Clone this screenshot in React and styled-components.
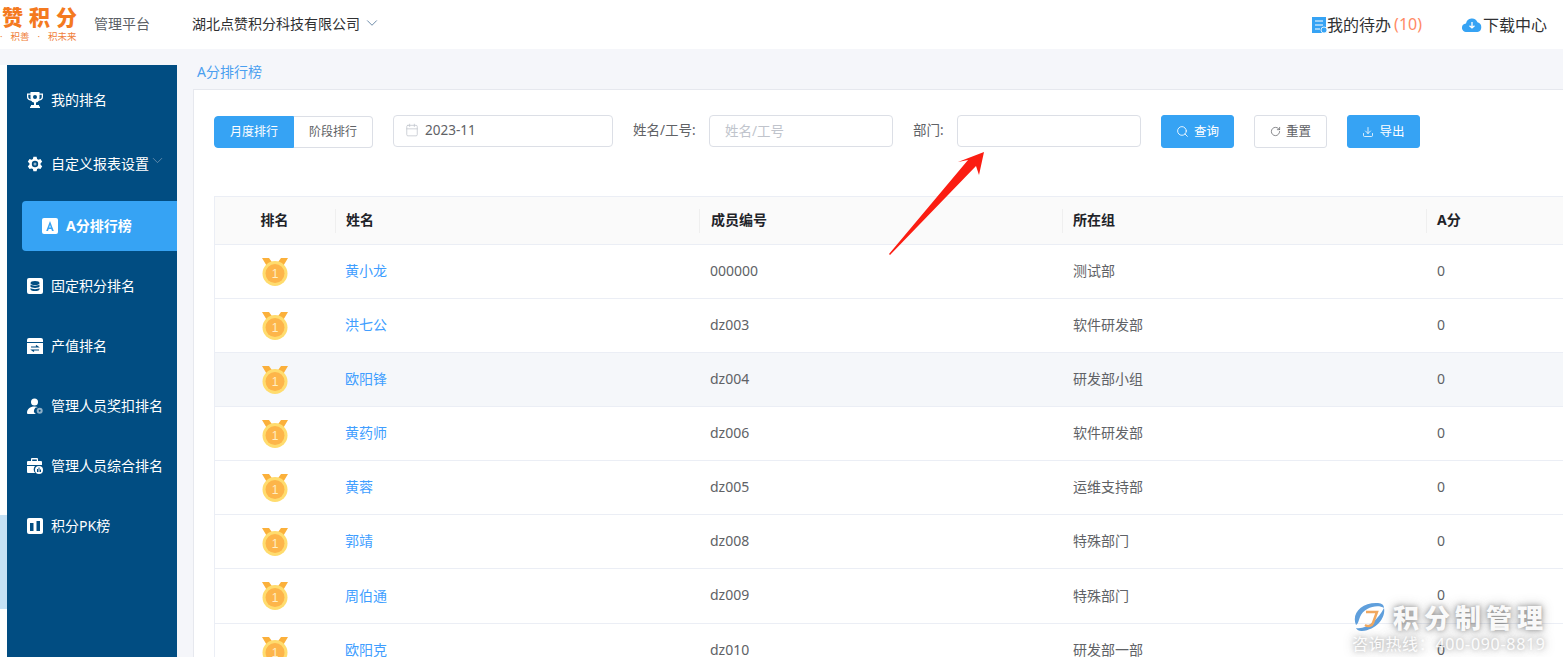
import React from 'react';
import styled, { createGlobalStyle } from 'styled-components';
import { ChevronDown, Search, RotateCw, Download, Calendar } from 'lucide-react';

const Global = createGlobalStyle`
  html, body { margin: 0; padding: 0; height: 100%; overflow: hidden; background: #f5f6fa; }
  * { box-sizing: border-box; }
  body { font-family: "Noto Sans", "Noto Sans CJK SC", sans-serif; }
`;

const Page = styled.div`
  position: relative;
  width: 1563px;
  height: 657px;
  overflow: hidden;
  display: flex;
  flex-direction: column;
`;

const Header = styled.header`
  flex: 0 0 49px;
  height: 49px;
  background: #fff;
  display: flex;
  align-items: center;
  color: #303133;
`;
const Logo = styled.div`
  width: 94px;
  padding-left: 2px;
  margin-top: -8px;
  display: flex;
  flex-direction: column;
  overflow: hidden;
`;
const LogoMark = styled.span`
  font-size: 21px;
  line-height: 24px;
  font-weight: 900;
  letter-spacing: 6px;
  color: #f47a1f;
  white-space: nowrap;
  font-family: "Noto Sans CJK SC", sans-serif;
  margin-top: 4px;
`;
const LogoTag = styled.span`
  font-size: 9.5px;
  line-height: 11px;
  color: #f0803a;
  white-space: nowrap;
  margin: 3px 0 0 -2px;
  word-spacing: 5.5px;
`;
const Platform = styled.span`
  width: 98px;
  font-size: 14px;
  color: #5c5f66;
  margin-top: -4px;
`;
const Company = styled.div`
  display: flex;
  align-items: center;
  gap: 3px;
  font-size: 14px;
  color: #303133;
  margin-top: -4px;
  flex: 1;
`;
const HeadLink = styled.div`
  display: flex;
  align-items: center;
  font-size: 16px;
  color: #303133;
  margin-right: ${p => p.$end}px;
  margin-top: -2px;
`;
const Count = styled.span`
  color: #ff8a65;
  margin-left: 3px;
`;

const Main = styled.div`
  flex: 1;
  display: flex;
  min-height: 0;
`;
const Rail = styled.div`
  flex: 0 0 7px;
  margin-top: 16px;
  background: #fff;
  padding-top: 450px;
`;
const RailMark = styled.div`
  height: 94px;
  background: #c5e1f5;
`;
const Sidebar = styled.nav`
  flex: 0 0 170px;
  margin-top: 16px;
  background: #014d82;
  padding-top: 5px;
  display: flex;
  flex-direction: column;
`;
const NavItem = styled.div`
  height: 60px;
  flex: none;
  display: flex;
  align-items: center;
  gap: 8px;
  padding-left: 20px;
  font-size: 14px;
  color: #fff;
  margin-top: ${p => p.$gap || 0}px;
  white-space: nowrap;
`;
const NavActive = styled.div`
  height: 50px;
  flex: none;
  margin: 7px 0 0 15px;
  padding-left: 20px;
  display: flex;
  align-items: center;
  gap: 8px;
  background: #36a3f4;
  border-radius: 4px 0 0 4px;
  color: #fff;
  font-weight: 700;
  font-size: 14px;
`;
const NavText = styled.span`
  margin-top: -2px;
`;
const NavArrow = styled.span`
  display: flex;
  margin: -8px 0 0 -8px;
  color: #7f9fba;
`;

const Content = styled.main`
  flex: 1;
  min-width: 0;
  padding-left: 16px;
  display: flex;
  flex-direction: column;
`;
const Crumb = styled.div`
  height: 40px;
  flex: none;
  padding: 14px 0 0 4px;
  font-size: 14px;
  line-height: 18px;
  color: #4a9ff0;
`;
const Card = styled.section`
  flex: 1;
  background: #fff;
  border: 1px solid #e6e8ee;
  border-right: 0;
  border-bottom: 0;
  padding: 25px 0 0 20px;
  overflow: hidden;
`;
const Toolbar = styled.div`
  display: flex;
  align-items: flex-start;
  height: 33px;
`;
const Segment = styled.div`
  display: flex;
  margin: 1px 20px 0 0;
`;
const SegButton = styled.button`
  width: ${p => p.$w}px;
  height: 32px;
  padding: 0 0 2px;
  font: inherit;
  font-size: 12px;
  border: 1px solid ${p => (p.$on ? '#36a3f4' : '#dcdfe6')};
  border-left-width: ${p => (p.$on ? 1 : 0)}px;
  background: ${p => (p.$on ? '#36a3f4' : '#fff')};
  color: ${p => (p.$on ? '#fff' : '#606266')};
  border-radius: ${p => (p.$on ? '4px 0 0 4px' : '0 4px 4px 0')};
`;
const Field = styled.div`
  width: ${p => p.$w}px;
  height: 32px;
  border: 1px solid #dcdfe6;
  border-radius: 4px;
  background: #fff;
  display: flex;
  align-items: center;
  gap: 6px;
  padding: 0 0 2px ${p => p.$pad || 15}px;
  font-size: 13.5px;
  color: ${p => (p.$ph ? '#c0c4cc' : '#606266')};
  margin-right: ${p => p.$after || 0}px;
  flex: none;
`;
const Label = styled.span`
  font-size: 13.5px;
  line-height: 30px;
  color: #606266;
  width: ${p => p.$w}px;
  flex: none;
`;
const Action = styled.button`
  width: 73px;
  height: 33px;
  flex: none;
  margin-left: 20px;
  padding: 0;
  font: inherit;
  font-size: 12.5px;
  border-radius: 3px;
  border: 1px solid ${p => (p.$plain ? '#dcdfe6' : '#36a3f4')};
  background: ${p => (p.$plain ? '#fff' : '#36a3f4')};
  color: ${p => (p.$plain ? '#606266' : '#fff')};
  display: flex;
  align-items: center;
  justify-content: center;
  gap: 5px;
`;
const ActionText = styled.span`
  margin-top: -2px;
`;

const Table = styled.div`
  margin-top: 48px;
  width: 1400px;
  border: 1px solid #ebeef5;
  border-right: 0;
`;
const Cols = styled.div`
  display: grid;
  grid-template-columns: 120px 364px 363px 364px 1fr;
  align-items: center;
`;
const HeadRow = styled(Cols)`
  height: 48px;
  background: #fafafa;
  border-bottom: 1px solid #ebeef5;
  font-size: 14px;
  font-weight: 700;
  color: #1f2329;
`;
const HeadCell = styled.div`
  height: 24px;
  line-height: 22px;
  padding-left: ${p => p.$inset || 10}px;
  border-left: 1px solid ${p => (p.$first ? 'transparent' : '#efefef')};
  text-align: ${p => (p.$first ? 'center' : 'left')};
  padding-right: ${p => (p.$first ? 12 : 0)}px;
`;
const Row = styled(Cols)`
  height: ${p => p.$h || 54}px;
  border-bottom: 1px solid #ebeef5;
  background: ${p => (p.$hover ? '#f5f7fa' : '#fff')};
  font-size: 14px;
  color: #606266;
`;
const Cell = styled.div`
  padding: 0 0 3px 11px;
`;
const NameCell = styled(Cell)`
  padding-left: 10px;
  color: #409eff;
`;
const RankCell = styled.div`
  display: flex;
  justify-content: center;
`;

const Arrow = styled.svg`
  position: absolute;
  left: 880px;
  top: 145px;
`;
const Watermark = styled.div`
  position: absolute;
  left: 1352px;
  top: 601px;
  color: rgba(255, 255, 255, 0.95);
  text-shadow: 0 0 5px rgba(70, 70, 70, 0.5), 0 0 12px rgba(70, 70, 70, 0.4);
`;
const WmTop = styled.div`
  display: flex;
  align-items: center;
  gap: 7px;
  font-size: 26px;
  line-height: 32px;
  font-weight: 900;
  letter-spacing: 5px;
  font-family: "Noto Sans CJK SC", sans-serif;
  white-space: nowrap;
`;
const WmBottom = styled.div`
  font-size: 16px;
  line-height: 22px;
  margin-top: 0;
  letter-spacing: 0.7px;
  white-space: nowrap;
  opacity: 0.85;
`;

const Medal = () => (
  <svg width="26" height="28" viewBox="0 0 26 28">
    <path d="M0 0h7l5 7h2l5-7h7l-6 10H6z" fill="#fbb03b" />
    <circle cx="13" cy="15.500" r="12.500" fill="#ffdc6e" />
    <circle cx="13" cy="15.500" r="9.500" fill="#fdb54a" />
    <text x="13" y="20" textAnchor="middle" fontSize="12" fontFamily="Liberation Sans" fill="#ffeec2">1</text>
  </svg>
);

const I = ({ children, w = 16, h = 16, vb = '0 0 16 16' }) => (
  <svg width={w} height={h} viewBox={vb} style={{ flex: 'none' }}>{children}</svg>
);

const icons = {
  trophy: (
    <I>
      <path d="M3.500 0h9v1.500H16V5c0 2-1.500 3.400-4.200 3.700-.7 1-1.600 1.600-2.800 1.800V13h3v1.500H13V16H3v-1.500h1V13h3v-2.500C5.800 10.300 4.900 9.700 4.200 8.700 1.500 8.400 0 7 0 5V1.500h3.500z" fill="#fff" />
      <path d="M1.300 2.800h2.200v3.300c.1.500.2.800.3 1.100C2.200 7 1.300 6.200 1.300 5zM14.700 2.800h-2.200v3.300c-.1.500-.2.800-.3 1.100 1.600-.2 2.500-1 2.500-2.200z" fill="#014d82" />
      <circle cx="8" cy="5" r="2" fill="#014d82" />
    </I>
  ),
  gear: (
    <I>
      <path d="M6.400 0h3.200l.5 2.200 1.300.7 2.100-.7L15.200 5l-1.600 1.500v1.500l1.600 1.500-1.700 2.800-2.100-.7-1.300.7-.5 2.200H6.400l-.5-2.200-1.300-.7-2.100.7L.8 9.500 2.400 8V6.500L.8 5l1.700-2.800 2.100.7 1.300-.7z" fill="#fff" transform="translate(0 .8)" />
      <circle cx="8" cy="8" r="3.200" fill="#014d82" />
      <circle cx="8" cy="8" r="1.500" fill="#8fb0c8" />
    </I>
  ),
  a: (
    <I>
      <rect width="16" height="16" rx="2" fill="#fff" />
      <path d="M8 3l3.800 10H10l-.7-2H6.700L6 13H4.200zM7.200 9.400h1.600L8 6.900z" fill="#36a3f4" />
    </I>
  ),
  db: (
    <I>
      <rect width="16" height="16" rx="2" fill="#fff" />
      <ellipse cx="8" cy="5" rx="4.500" ry="2" fill="#014d82" />
      <path d="M3.500 6.500c1 1.500 8 1.500 9 0v2.300c-1 1.500-8 1.500-9 0zM3.500 10c1 1.500 8 1.500 9 0v1.500c-1 2-8 2-9 0z" fill="#014d82" />
    </I>
  ),
  value: (
    <I>
      <path d="M2 0h12a2 2 0 0 1 2 2v2H0V2a2 2 0 0 1 2-2zM0 5h16v11H0z" fill="#fff" />
      <path d="M4 9h7l-2-1.500M12 12H5l2 1.500" stroke="#014d82" strokeWidth="1.200" fill="none" />
    </I>
  ),
  user: (
    <I>
      <circle cx="7.500" cy="4" r="3.500" fill="#fff" />
      <path d="M0 15c0-4 3-6.500 7.500-6.500 1.400 0 2.700.3 3.700.9A3.500 3.500 0 0 0 9 16H1a1 1 0 0 1-1-1z" fill="#fff" />
      <circle cx="12.700" cy="12.700" r="3" fill="#8fb0c8" />
      <circle cx="12.700" cy="12.700" r="1" fill="#014d82" />
    </I>
  ),
  case: (
    <I>
      <path d="M5 0h5a1 1 0 0 1 1 1v2H9.800V1.500H5.200V3H4V1a1 1 0 0 1 1-1zM1 3h13a1 1 0 0 1 1 1v3H0V4a1 1 0 0 1 1-1zM0 8h8a5 5 0 0 0 .2 7H1a1 1 0 0 1-1-1z" fill="#fff" />
      <circle cx="12" cy="12" r="4" fill="#fff" />
      <path d="M10.500 11v3M12 9.500V14M13.500 11.500V14" stroke="#014d82" strokeWidth="1" />
    </I>
  ),
  pk: (
    <I>
      <rect width="16" height="16" rx="2" fill="#fff" />
      <rect x="3" y="5" width="3.500" height="8" fill="#014d82" />
      <rect x="9.500" y="3" width="3.500" height="10" fill="#014d82" />
    </I>
  ),
};

const rows = [
  ['黄小龙', '000000', '测试部'],
  ['洪七公', 'dz003', '软件研发部'],
  ['欧阳锋', 'dz004', '研发部小组'],
  ['黄药师', 'dz006', '软件研发部'],
  ['黄蓉', 'dz005', '运维支持部'],
  ['郭靖', 'dz008', '特殊部门'],
  ['周伯通', 'dz009', '特殊部门'],
  ['欧阳克', 'dz010', '研发部一部'],
];

export default function App() {
  return (
    <Page>
      <Global />
      <Header>
        <Logo>
          <LogoMark>赞积分</LogoMark>
          <LogoTag>· 积善 · 积未来</LogoTag>
        </Logo>
        <Platform>管理平台</Platform>
        <Company>
          湖北点赞积分科技有限公司
          <ChevronDown size={18} strokeWidth={1.1} color="#4f7396" />
        </Company>
        <HeadLink $end={40}>
          <svg width="15" height="16" viewBox="0 0 15 16" style={{ marginTop: 2 }}>
            <rect width="14" height="16" fill="#36a3f4" />
            <path d="M3 4h8M3 8h8M3 12h5" stroke="#fff" strokeWidth="1" />
            <circle cx="12" cy="13" r="3" fill="#36a3f4" stroke="#fff" strokeWidth="0.8" />
          </svg>
          我的待办<Count>(10)</Count>
        </HeadLink>
        <HeadLink $end={16}>
          <svg width="20" height="15" viewBox="0 0 20 15" style={{ marginRight: 1, marginTop: 2 }}>
            <path d="M4.500 15A4.300 4.300 0 0 1 4 6.400 6 6 0 0 1 15.500 5.300 5 5 0 0 1 15.500 15z" fill="#36a3f4" />
            <path d="M10 5v6M7.500 8.800L10 11l2.500-2.200" stroke="#fff" strokeWidth="1.300" fill="none" />
          </svg>
          下载中心
        </HeadLink>
      </Header>
      <Main>
        <Rail><RailMark /></Rail>
        <Sidebar>
          <NavItem>{icons.trophy}<NavText>我的排名</NavText></NavItem>
          <NavItem $gap={4}>
            {icons.gear}<NavText>自定义报表设置</NavText>
            <NavArrow><ChevronDown size={17} strokeWidth={1} /></NavArrow>
          </NavItem>
          <NavActive>{icons.a}<NavText>A分排行榜</NavText></NavActive>
          <NavItem $gap={5}>{icons.db}<NavText>固定积分排名</NavText></NavItem>
          <NavItem>{icons.value}<NavText>产值排名</NavText></NavItem>
          <NavItem>{icons.user}<NavText>管理人员奖扣排名</NavText></NavItem>
          <NavItem>{icons.case}<NavText>管理人员综合排名</NavText></NavItem>
          <NavItem>{icons.pk}<NavText>积分PK榜</NavText></NavItem>
        </Sidebar>
        <Content>
          <Crumb>A分排行榜</Crumb>
          <Card>
            <Toolbar>
              <Segment>
                <SegButton $on $w={80}>月度排行</SegButton>
                <SegButton $w={79}>阶段排行</SegButton>
              </Segment>
              <Field $w={220} $pad={11} $after={20}>
                <Calendar size={14} strokeWidth={1.3} color="#c0c4cc" />
                2023-11
              </Field>
              <Label $w={76}>姓名/工号:</Label>
              <Field $w={184} $ph $after={20}>姓名/工号</Field>
              <Label $w={44}>部门:</Label>
              <Field $w={184} />
              <Action><Search size={13} strokeWidth={1.6} /><ActionText>查询</ActionText></Action>
              <Action $plain><RotateCw size={11} strokeWidth={1.6} /><ActionText>重置</ActionText></Action>
              <Action><Download size={12} strokeWidth={1.6} /><ActionText>导出</ActionText></Action>
            </Toolbar>
            <Table>
              <HeadRow>
                <HeadCell $first>排名</HeadCell>
                <HeadCell>姓名</HeadCell>
                <HeadCell $inset={11}>成员编号</HeadCell>
                <HeadCell>所在组</HeadCell>
                <HeadCell>A分</HeadCell>
              </HeadRow>
              {rows.map((r, i) => (
                <Row key={r[0]} $hover={i === 2} $h={i === 6 ? 55 : 54}>
                  <RankCell><Medal /></RankCell>
                  <NameCell>{r[0]}</NameCell>
                  <Cell>{r[1]}</Cell>
                  <Cell>{r[2]}</Cell>
                  <Cell>0</Cell>
                </Row>
              ))}
            </Table>
          </Card>
        </Content>
      </Main>
      <Arrow width="110" height="115" viewBox="0 0 110 115">
        <path d="M104 7L99 30 96 21 10 110 9 109 88 15 78 17z" fill="#fb1d12" />
      </Arrow>
      <Watermark>
        <WmTop>
          <svg width="34" height="32" viewBox="0 0 34 32">
            <path d="M4 24C-1 12 10 1 26 2c4 .3 6 2 6 5C26 3 12 6 8 16c-1.500 4-2 7-4 8z" fill="#5f9fdc" />
            <path d="M32 7c2 10-8 22-22 23-3 .2-5-1-6-3 10 2 22-8 28-20z" fill="#5f9fdc" />
            <path d="M14 11h11l-4 11c-1 3-5 4-8 2" fill="none" stroke="#f0a860" strokeWidth="2.500" />
          </svg>
          积分制管理
        </WmTop>
        <WmBottom>咨询热线：400-090-8819</WmBottom>
      </Watermark>
    </Page>
  );
}
